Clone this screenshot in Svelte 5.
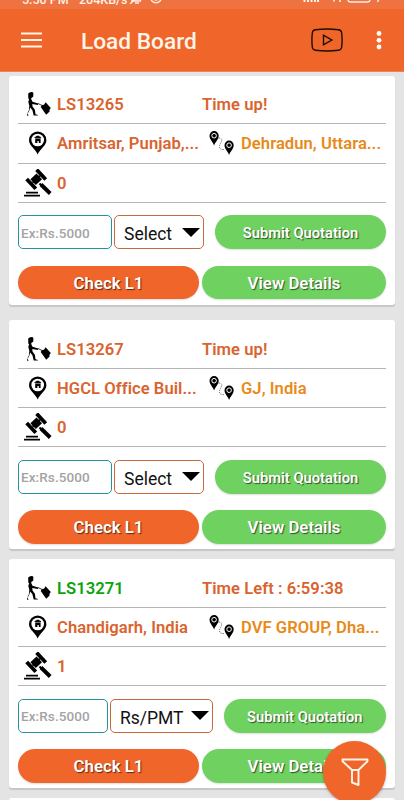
<script lang="ts">
  type Load = {
    id: string;
    time: string;
    from: string;
    to: string;
    bids: number;
    unit: string;
    active?: boolean;
  };

  const loads: Load[] = [
    { id: 'LS13265', time: 'Time up!', from: 'Amritsar, Punjab,...', to: 'Dehradun, Uttara...', bids: 0, unit: 'Select' },
    { id: 'LS13267', time: 'Time up!', from: 'HGCL Office Buil...', to: 'GJ, India', bids: 0, unit: 'Select' },
    { id: 'LS13271', time: 'Time Left : 6:59:38', from: 'Chandigarh, India', to: 'DVF GROUP, Dha...', bids: 1, unit: 'Rs/PMT', active: true },
  ];
</script>

{#snippet smallPin(x: number, y: number)}
  <g transform="translate({x} {y})">
    <path d="M4.6 14.5C3.6 11 0 8.500 0 4.700a4.600 4.600 0 0 1 9.200 0c0 3.800-3.600 6.300-4.600 9.800z" />
    <circle cx="4.6" cy="4.7" r="2.3" fill="none" stroke="#fff" stroke-width="1" />
  </g>
{/snippet}

<div class="screen">
  <div class="status">
    <span class="clock">5:50 PM</span>
    <span class="speed">204KB/s</span>
    <svg class="status-left" width="34" height="12" viewBox="0 0 34 12" fill="none" stroke="currentColor" stroke-width="1.3">
      <path d="M2 9h10M3.5 9V4a4 4 0 0 1 8 0v5M6 11h4M1 12 13 1" />
      <circle cx="27" cy="5.5" r="5.3" />
      <path d="M24 6.5q3 3 6 0" />
    </svg>
    <svg class="status-right" width="78" height="12" viewBox="0 0 78 12" fill="none" stroke="currentColor">
      <path d="M1.500 11V9M5 11V8M8.500 11V6M12 11V4M15 11V2" stroke-width="2" />
      <path d="M26 5.500q5-5 10 0M28 8q3-3 6 0M31 8.500v2M37 7v4" stroke-width="1.6" />
      <rect x="45" y="1" width="22" height="10" rx="2.5" stroke-width="1.3" />
      <path d="M52 8h3M58 8h3" stroke-width="1.5" />
      <path d="M77 4h-3l3-4M74.500 11l3-6" stroke-width="1.4" />
    </svg>
  </div>

  <header>
    <svg class="menu" width="21" height="16" viewBox="0 0 21 16" aria-hidden="true">
      <path d="M0 1.500h21M0 8h21M0 14.500h21" stroke="currentColor" stroke-width="2" />
    </svg>
    <h1>Load Board</h1>
    <svg class="video" width="32" height="24" viewBox="0 0 32 24" fill="none" stroke="#1d0e06" stroke-width="1.4" aria-hidden="true">
      <path d="M4.500 1.700Q16 .3 27.500 1.700Q30.200 2 30.600 4.500Q31.600 12 30.600 19.500Q30.200 22 27.500 22.300Q16 23.700 4.500 22.300Q1.800 22 1.400 19.500Q.4 12 1.400 4.500Q1.800 2 4.500 1.700z" />
      <path d="M12.500 7.200v9.600l8.300-4.800z" />
    </svg>
    <svg class="dots" width="6" height="20" viewBox="0 0 6 20" fill="currentColor" aria-hidden="true">
      <circle cx="3" cy="3.5" r="2.4" /><circle cx="3" cy="10.3" r="2.4" /><circle cx="3" cy="17" r="2.4" />
    </svg>
  </header>

  <main>
    {#each loads as load}
      <section class="card">
        <div class="row">
          <svg class="icon" width="30" height="28" viewBox="0 0 30 28" aria-hidden="true">
            <path d="M6.200 3.500Q8 1.400 11 2.200l.4 1.600-.2 3-1.600.9-.5 1 1.400 3 5.800 1.900-.4 1.300-5.600-1 .2 2.700 2.400 3.100.6 4.500 2.400.7v.7h-4.200l-1.300-5.300-2.200-2.700-1.200 3.900-1.800 2.600 1.200 1v.6H5.200l-.3-1.400 2-4 .4-4.300-1-4.200.8-2.400-.8-1z" />
            <path d="m18.700 17 1.300-1.900 2-.3 1.600-2.500 5.200 5.700-1.400 2 .2 1.500-3.400 3.300z" />
            <path d="m16 13.500 4.500 2.200" stroke="#222" stroke-width=".9" />
          </svg>
          <span class="text id" class:active={load.active}>{load.id}</span>
          <span class="text">{load.time}</span>
        </div>

        <div class="row">
          <svg class="icon" width="30" height="28" viewBox="0 0 30 28" aria-hidden="true">
            <path d="M15.700 25.500C13.500 20 7 16.500 7 11.200a8.700 8.700 0 0 1 17.400 0c0 5.300-6.500 8.800-8.700 14.300z" />
            <circle cx="15.7" cy="11" r="6.3" fill="#fff" />
            <path d="m12.300 9 .8-1.300 1-.2.500-.8h2.400l.5.800 1 .2.800 1.300-.7.300v4.600h-1.800v-2h-1.400v2h-2.200V9.300z" />
            <path d="M12.800 9.400h6" stroke="#fff" stroke-width=".5" />
          </svg>
          <span class="text id">{load.from}</span>
          <svg class="route" width="26" height="26" viewBox="0 0 26 26" aria-hidden="true">
            {@render smallPin(0.5, 1)}
            {@render smallPin(15.5, 10.5)}
            <path d="M9.500 8c4 0 3.800 2.500 2 5.500s-2 6.500 4 6" fill="none" stroke="#444" stroke-width=".7" stroke-dasharray="1.3 1" />
          </svg>
          <span class="text to">{load.to}</span>
        </div>

        <div class="row">
          <svg class="icon" width="30" height="28" viewBox="0 0 30 28" aria-hidden="true">
            <path d="M2 26.600h16M4 23.600h12" stroke="#000" stroke-width="1.7" />
            <!-- gavel head -->
            <g transform="translate(14.2 10.2) rotate(-43)">
              <path d="M-4.200-4h8.400v8h-8.400zM-8.700-6.700h3.800v13.400h-3.800zM4.900-6.700h3.800v13.400H4.900z" />
              <path d="M-5 0H5" stroke="#000" stroke-width="2" />
            </g>
            <path d="m17.500 14.500 2 2" stroke="#000" stroke-width="2" />
            <path d="m19 15.500 9.200 9" stroke="#000" stroke-width="3.9" />
          </svg>
          <span class="text">{load.bids}</span>
        </div>

        <div class="quote" class:wide={load.unit !== 'Select'}>
          <input type="text" placeholder="Ex:Rs.5000" />
          <button class="select">
            {load.unit}
            <svg width="18" height="9" viewBox="0 0 18 9" aria-hidden="true"><path d="M0 0h18L9 9z" /></svg>
          </button>
          <button class="pill submit">Submit Quotation</button>
        </div>

        <div class="actions">
          <button class="pill check">Check L1</button>
          <button class="pill">View Details</button>
        </div>
      </section>
    {/each}
    <section class="card"></section>
  </main>

  <button class="filter" aria-label="Filter">
    <svg width="28" height="28" viewBox="0 0 28 28" fill="none" stroke="#fff5ea" stroke-width="1.9" stroke-linejoin="round">
      <path d="M1.500 1.500h25v1.700L17.500 12v15l-6.500-2.500V12L1.500 3.200zM11 12h6.500" />
    </svg>
  </button>
</div>

<style>
  :global(body) { background: #e4e4e4; }

  .screen {
    position: relative;
    width: 404px;
    height: 800px;
    overflow: hidden;
    font-family: Roboto, sans-serif;
    background: #e4e4e4;
  }

  .status {
    display: flex;
    align-items: flex-end;
    height: 9px;
    padding: 0 23px 0 22px;
    overflow: hidden;
    color: #fff1e6;
    background: #ef7340;
    font-size: 12.5px;
    font-weight: 500;
    line-height: 15px;
    white-space: nowrap;
  }

  .status span { margin-bottom: 2px; }
  .clock { width: 57px; }
  .speed { width: 50px; }
  .status-left { margin-bottom: 5px; }
  .status-right { margin: 0 0 6px auto; }

  header {
    display: flex;
    align-items: center;
    box-sizing: border-box;
    height: 63px;
    padding: 0 22px 0 21px;
    color: #fff5ea;
    background: #f06529;
    border-bottom: 1px solid #eb8558;
  }

  h1 {
    flex: 1;
    margin: 4px 0 0 39px;
    font-size: 22.7px;
    font-weight: 500;
    line-height: 28px;
  }

  .video { margin-right: 33px; }
  .dots { color: #fff; }

  main {
    display: flex;
    flex-direction: column;
    padding: 4px 9px 0;
  }

  .card {
    box-sizing: border-box;
    flex: none;
    height: 229px;
    margin-bottom: 10px;
    padding: 9px 9px 0;
    border-radius: 3px;
    background: #fff;
    box-shadow: 0 2px 1px #c6c6c6;
  }

  .card:first-child { margin-bottom: 15.4px; }

  .row {
    display: flex;
    align-items: center;
    box-sizing: border-box;
    height: 39.3px;
    border-bottom: 1px solid #b4b4b4;
  }

  .icon {
    flex: none;
    margin-left: 4px;
    margin-right: 5px;
  }

  .text {
    padding-top: 2px;
    color: #d9642f;
    font-size: 16.6px;
    font-weight: 600;
    line-height: 20px;
    letter-spacing: 0.05px;
    white-space: nowrap;
  }

  .id { width: 145px; }
  .active { color: #0ca30c; }
  .to { color: #e88a1a; }
  .route { flex: none; margin: 0 6px 0 7px; }

  .quote {
    display: grid;
    grid-template-columns: 94px 90px 1fr;
    column-gap: 2px;
    height: 34px;
    margin-top: 12.4px;
  }

  .quote.wide { grid-template-columns: 90px 102.5px 1fr; }

  input {
    box-sizing: border-box;
    min-width: 0;
    height: 34px;
    padding: 1px 0 0 2px;
    border: 1px solid #20959b;
    border-radius: 5px;
    outline: none;
    background: #fff;
    font: 500 13.5px Roboto, sans-serif;
    letter-spacing: 0.1px;
  }

  input::placeholder { color: #a3a3a3; opacity: 1; }

  .select {
    display: flex;
    align-items: center;
    justify-content: space-between;
    padding: 4px 3px 0 9px;
    border: 1px solid #c66a3c;
    border-radius: 5px;
    background: #fff;
    color: #111;
    font: 400 17.5px Roboto, sans-serif;
  }

  .select svg { margin-bottom: 4px; }

  .pill {
    padding: 1px 0 0;
    border: 0;
    border-radius: 17px;
    background: #6fd15f;
    box-shadow: 0 1px 2px #0002;
    color: #fff;
    font: 600 16.8px Roboto, sans-serif;
    text-shadow: 1px 1px 1px #0009;
    white-space: nowrap;
  }

  .submit {
    margin-left: 9px;
    padding-top: 2px;
    font-size: 14.7px;
  }

  .check { background: #f06529; }

  .actions {
    display: grid;
    grid-template-columns: 181px 184px;
    justify-content: space-between;
    height: 33.5px;
    margin-top: 16.5px;
  }

  /* floating filter button, lies over the last card */
  .filter {
    position: absolute;
    left: 323px;
    top: 741px;
    display: flex;
    align-items: center;
    justify-content: center;
    width: 63px;
    height: 63px;
    padding: 0 0 2px;
    border: 0;
    border-radius: 50%;
    background: #f06529;
    box-shadow: 0 1px 3px #0004;
  }
</style>
